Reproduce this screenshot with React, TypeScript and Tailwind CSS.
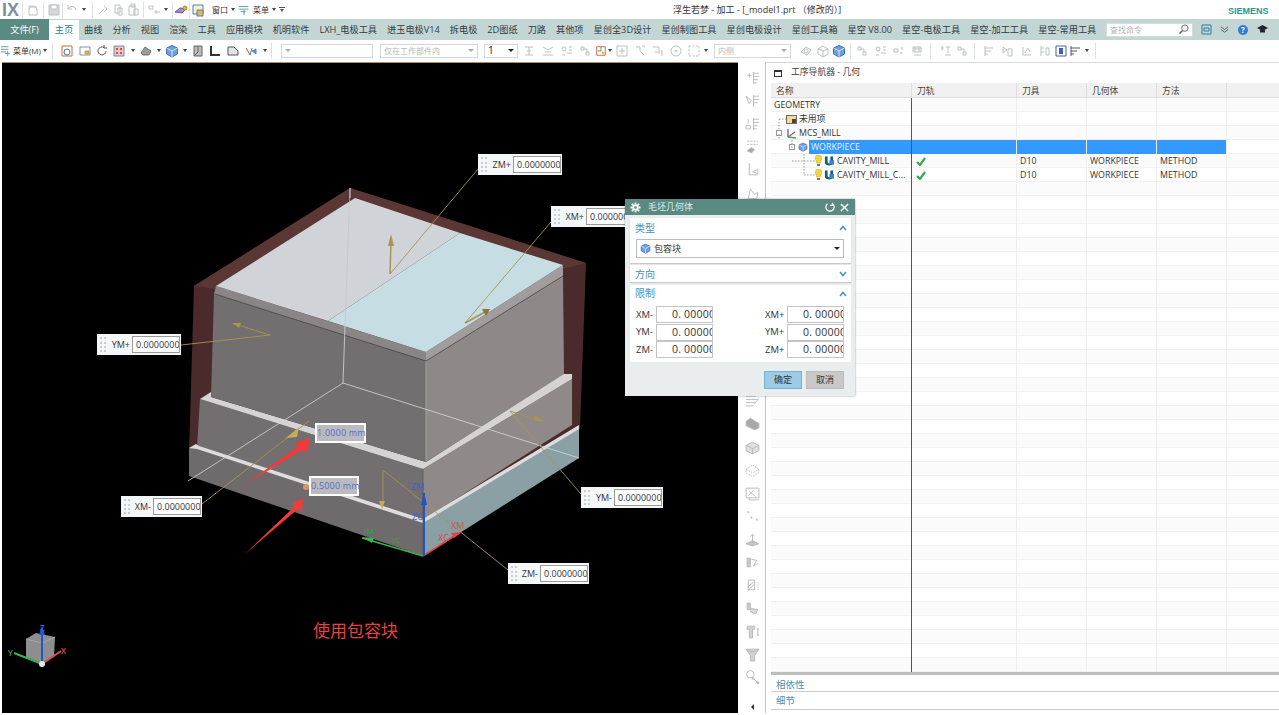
import React from "react";

const FONT = "font-['Open_Sans','Noto_Sans_CJK_SC',sans-serif]";

function Sep({ m = "mx-[3px]" }: { m?: string }) {
  return <span className={`w-px h-[16px] bg-[#dfe2e3] shrink-0 ${m}`} />;
}
function Caret({ m = "mx-[3px]" }: { m?: string }) {
  return <span className={`w-0 h-0 border-x-[2px] border-x-transparent border-t-[3px] border-t-[#444] shrink-0 ${m}`} />;
}
function Ico({ children, w = "w-[18px]" }: { children: React.ReactNode; w?: string }) {
  return (
    <span className={`${w} h-[16px] flex items-center justify-center shrink-0`}>
      <svg width="14" height="14" viewBox="0 0 14 14" fill="none" stroke="#bcc0c1" strokeWidth="1">
        {children}
      </svg>
    </span>
  );
}
const Cube = () => (
  <>
    <path d="M7 1.5 12.5 4v6L7 13 1.5 10V4Z" fill="#6f9fe0" stroke="#3a6fbb" />
    <path d="M1.5 4 7 7l5.5-3M7 7v6" stroke="#d6e6fa" />
  </>
);
const Gears = () => (
  <>
    <circle cx="4" cy="5" r="2" />
    <path d="M7 9h5M9 3h3M9 6h3M2 11h3" />
  </>
);
const Tri = () => (
  <>
    <path d="M2 3h3v3H2zM7 8h3v3H7z" />
    <path d="M5 5h3v3" />
  </>
);

const menus = ["曲线", "分析", "视图", "渲染", "工具", "应用模块", "机明软件", "LXH_电极工具", "进玉电极V14", "拆电极", "2D图纸", "刀路", "其他项", "星创全3D设计", "星创制图工具", "星创电极设计", "星创工具箱", "星空 V8.00", "星空-电极工具", "星空-加工工具", "星空-常用工具"];

function TitleBar() {
  return (
    <div className="relative h-[19px] flex items-center bg-white shrink-0">
      <span className="ml-[2px] w-[17px] text-[18px] leading-none font-bold text-[#7f8f98] font-['Liberation_Sans',sans-serif]">IX</span>
      <Sep />
      <Ico w="w-[14px]"><path d="M3 3h5l3 3v6H3z" /><path d="M3 6l2-2h6" /></Ico>
      <Sep />
      <Ico w="w-[14px]"><path d="M2 2h10v10H2z" fill="#d5d8da" /><path d="M4 2h6v4H4z" fill="#fff" /></Ico>
      <Sep m="mx-[1px]" />
      <span className="w-px" />
      <Ico w="w-[14px]"><path d="M3 6c2-4 7-3 8 1M3 2v4h4" /></Ico>
      <Caret />
      <Sep />
      <Ico w="w-[14px]"><path d="M3 11l5-5M8 3l3 3-3 3" /></Ico>
      <Ico w="w-[16px]"><path d="M4 2h5v8H4zM7 5h4v7H7z" /></Ico>
      <Ico w="w-[14px]"><path d="M3 3h6v9H3zM5 1h4v3H5zM8 6h4v6H8z" /></Ico>
      <Sep />
      <Ico w="w-[14px]"><path d="M2 3h4v3H2zM8 8h2v2H8zM11 9h2" /></Ico>
      <Caret />
      <Sep m="mx-[1px]" />
      <Ico w="w-[14px]"><path d="M1 9l5-4 6 1-4 4z" fill="#a78ac8" stroke="#6b5a9c" /><circle cx="11" cy="5" r="2" fill="#e8b13a" stroke="#b9861c" /></Ico>
      <Sep m="mx-[1px]" />
      <Ico w="w-[14px]"><path d="M2 2h10v9H2z" fill="#fff1bf" stroke="#4a7fc8" /><path d="M6 7h6v6H6z" fill="#e9b84c" stroke="#4a7fc8" /></Ico>
      <span className="text-[8px] text-[#333] ml-[7px]">窗口</span>
      <Caret />
      <Ico w="w-[12px]"><path d="M1 3h11M1 6h11M3 9h6M7 7v6" stroke="#4e8a9e" /></Ico>
      <span className="text-[8px] text-[#333] ml-[3px]">菜单</span>
      <Caret />
      <span className="w-[6px] h-[5px] border-t border-[#555] flex justify-center"><span className="mt-px w-0 h-0 border-x-[2px] border-x-transparent border-t-[3px] border-t-[#555]" /></span>
      <span className="absolute left-[673px] top-[3px] text-[9px] leading-[14px] whitespace-nowrap text-[#333]">浮生若梦 - 加工 - [_model1.prt （修改的）]</span>
      <span className="absolute left-[1228px] top-[5px] text-[9px] leading-[12px] font-bold text-[#1a9a9a] font-['Liberation_Sans',sans-serif]">SIEMENS</span>
    </div>
  );
}

function MenuBar() {
  return (
    <div className="h-[21px] flex items-center bg-[#c4d6d4] shrink-0 text-[9.2px] text-[#2f3c44] whitespace-nowrap">
      <span className="w-[49px] h-full flex items-center justify-center bg-[#5b8a83] text-white">文件(F)</span>
      <span className="w-[30px] h-full flex items-center justify-center bg-white text-[#2b7f9a] border-t border-[#c4d6d4]">主页</span>
      <div className="flex items-center gap-[10px] ml-[5px] w-[1022px]">
        {menus.map((m) => (
          <span key={m}>{m}</span>
        ))}
      </div>
      <div className="w-[87px] h-[14px] bg-white border border-[#d5dcdc] flex items-center justify-between px-[3px] text-[8px] text-[#aeb4b6]">
        查找命令
        <svg width="11" height="11" viewBox="0 0 12 12" fill="none" stroke="#666"><circle cx="7.5" cy="4.5" r="3.5" fill="#eef2f4" /><path d="M5 7 1.5 10.5" strokeWidth="1.6" /></svg>
      </div>
      <svg className="ml-[8px]" width="11" height="11" viewBox="0 0 11 11" fill="none" stroke="#2c7aa8"><path d="M1 1h9v9H1z" /><path d="M3 4h5v3H3z" /></svg>
      <svg className="ml-[8px]" width="9" height="9" viewBox="0 0 10 10" fill="none" stroke="#556"><path d="M1 2l4 3 4-3M1 5l4 3 4-3" /></svg>
      <span className="ml-[9px] w-[10px] h-[10px] rounded-full bg-[#2f7cd6] text-white text-[8px] leading-[10px] text-center font-bold">?</span>
      <svg className="ml-[9px]" width="11" height="9" viewBox="0 0 11 9"><path d="M0 3 5.5 0 11 3 5.5 6Z" fill="#223" /><path d="M3 5v2.500h5V5" fill="#223" /></svg>
    </div>
  );
}

function Combo({ w, text, caret = "#aaa", strong }: { w: string; text?: string; caret?: string; strong?: boolean }) {
  return (
    <span className={`${w} h-[14px] bg-white border border-[#d6d6d6] flex items-center justify-between px-[3px] text-[8px] shrink-0 ${strong ? "text-[#222] text-[10px]" : "text-[#b4b8ba]"}`}>
      {text ?? ""}
      <span className="w-0 h-0 border-x-[3px] border-x-transparent border-t-[3px]" style={{ borderTopColor: caret }} />
    </span>
  );
}

function ToolBar() {
  return (
    <div className="h-[21px] flex items-center bg-white shrink-0 whitespace-nowrap">
      <Ico w="w-[12px]"><path d="M1 2h9M1 5h9M1 8h6M9 7v6M6 10h6" stroke="#5b8a9c" /></Ico>
      <span className="w-[27px] text-[8px] text-[#333] ml-px">菜单(M)</span>
      <Caret />
      <span className="w-px" />
      <Sep m="mx-[1px]" />
      <span className="w-[4px]" />
      <Ico><path d="M2 2h10v10H2z" stroke="#c96a45" /><circle cx="7" cy="8" r="3" stroke="#3a76b0" /></Ico>
      <Ico><path d="M2 3h10v8H2z" stroke="#7b94ad" /><path d="M7 7h4v3H7z" fill="#e6b665" stroke="#c49a4c" /></Ico>
      <Ico w="w-[16px]"><path d="M11 7a4 4 0 1 1-2-3.500M9 1v3h3" stroke="#555" /></Ico>
      <Ico><path d="M2 2h10v10H2z" fill="#e8c9c4" stroke="#7289b0" /><path d="M4 4h2v2H4zM8 4h2v2H8zM4 8h2v2H4zM8 8h2v2H8z" fill="#d84b3c" stroke="none" /></Ico>
      <Caret />
      <Ico w="w-[16px]"><path d="M2 9l4-6 6 4-2 4H4z" fill="#9a9a9a" stroke="#777" /></Ico>
      <Caret />
      <Ico w="w-[16px]"><Cube /></Ico>
      <Caret />
      <Ico w="w-[16px]"><path d="M3 2h8v10H3z" fill="#b8bcc0" stroke="#666" /><path d="M3 12 7 8V2" stroke="#666" /></Ico>
      <Ico><path d="M3 2v9h9" stroke="#333" strokeWidth="2" /></Ico>
      <Ico><path d="M2 11V3h6l4 4v4z" fill="#e4e5e7" stroke="#555" /></Ico>
      <Ico><path d="M2 4l4 7" stroke="#c84a3b" /><path d="M6 11l2-7" stroke="#3d9c52" /><path d="M8 7l4-2v5z" fill="#6a92d8" stroke="#5c84ca" /></Ico>
      <Caret />
      <Sep m="mx-[1px]" />
      <span className="w-[8px]" />
      <Combo w="w-[92px]" />
      <span className="w-[7px]" />
      <Combo w="w-[98px]" text="仅在工作部件内" />
      <span className="w-[6px]" />
      <Combo w="w-[34px]" text="1" caret="#222" strong />
      <span className="w-px" />
      <Ico w="w-[19px]"><path d="M3 3h8M3 11h8M5 7h4M7 3v8" /></Ico>
      <Ico w="w-[19px]"><path d="M2 3l5 3 5-3M2 11h10M4 8h6" /></Ico>
      <Ico w="w-[19px]"><Gears /></Ico>
      <Ico w="w-[19px]"><Tri /></Ico>
      <Ico w="w-[12px]"><path d="M2 2h10v10H2z" stroke="#c9594a" fill="#fff" /><path d="M7 2v5H3" stroke="#4a8f55" /><path d="M7 8h5l-2.500 4z" fill="#e7c23c" stroke="none" /></Ico>
      <Caret m="mx-[1px]" />
      <Ico><path d="M2 2h10v10H2zM7 4v6M4 7h6" /></Ico>
      <Ico><path d="M3 3h4v4M7 7l4 4M9 2h3" /></Ico>
      <Ico><path d="M2 3h6M8 3v7M4 8h3M11 6v6" /></Ico>
      <Ico><circle cx="7" cy="7" r="5" /><circle cx="7" cy="7" r="1" /></Ico>
      <Ico><path d="M2 2h10v10H2z" strokeDasharray="2 1.500" /></Ico>
      <Caret m="mx-[1px]" />
      <span className="w-[5px]" />
      <Combo w="w-[77px]" text="内侧" />
      <span className="w-[6px]" />
      <Ico><path d="M2 8l5-5 5 3-4 5z" /><circle cx="7" cy="7" r="2" /></Ico>
      <Ico w="w-[16px]"><path d="M7 2l5 3v5l-5 3-5-3V5zM7 7v6M2 5l5 2 5-2" /></Ico>
      <Ico w="w-[16px]"><Cube /></Ico>
      <Sep />
      <Ico><Tri /></Ico>
      <Ico><Gears /></Ico>
      <Ico w="w-[17px]"><path d="M2 5h4v3H2zM8 9h3M10 3v3" /></Ico>
      <Ico w="w-[20px]"><path d="M3 3h8v5H3zM3 5h8M5 3v5M9 3v5M4 11h7" /></Ico>
      <Sep />
      <span className="w-[3px]" />
      <Ico><path d="M2 4h3M3 2v5M7 3h4M9 3v6M6 11h6" /></Ico>
      <Ico w="w-[16px]"><Tri /></Ico>
      <Sep />
      <span className="w-[2px]" />
      <Ico><path d="M3 2v10M3 4h8M3 7h6M3 10h3" /></Ico>
      <Ico><path d="M3 3l4 3-4 3zM8 5h4v7H8z" /></Ico>
      <Ico w="w-[20px]"><path d="M4 3v8h8M6 9l3-5 2 4" /></Ico>
      <Ico><path d="M3 2v10M3 4h3M3 8h3M8 4h3v7H8z" /></Ico>
      <Ico w="w-[14px]"><path d="M2 2h10v10H2z" stroke="#3f62b8" /><path d="M5 4h4v6H5z" fill="#3f62b8" stroke="none" /></Ico>
      <Ico w="w-[14px]"><path d="M3 2v10M3 4h9M3 7h6M3 10h3" stroke="#556" /></Ico>
      <Caret />
      <Sep />
    </div>
  );
}

function Callout({ pos, label, w }: { pos: string; label: string; w: string }) {
  return (
    <div className={`absolute ${pos} ${w} h-[21px] bg-[#f3f7f7] flex items-center text-[9px] text-[#333]`}>
      <span className="ml-[3px] w-[6px] h-[15px] border-x-2 border-dotted border-[#c9cdcd] shrink-0" />
      <span className="flex-1 text-right pr-[2px] whitespace-nowrap">{label}</span>
      <span className="w-[48px] h-[17px] mr-px bg-white border border-[#9a9a9a] overflow-hidden px-[3px] leading-[15px] text-[#333] whitespace-nowrap shrink-0">0.0000000</span>
    </div>
  );
}

function DimBox({ pos, w, text }: { pos: string; w: string; text: string }) {
  return (
    <div className={`absolute ${pos} ${w} h-[20px] bg-white p-[2px]`}>
      <div className="h-full bg-[#bbbabf] text-[9px] tracking-[0.2px] leading-[16px] text-center text-[#5570c4] whitespace-nowrap">{text}</div>
    </div>
  );
}

function Model() {
  const gold = "#a8954f";
  return (
    <svg className="absolute inset-0" width="736" height="651" viewBox="2 62 736 651" fill="none">
      <polygon points="194,285 350,187 586,262 580,428 420,525 189,452" fill="#4a2a2b" />
      <polygon points="194,285 350,187 586,262 563,268 355,199 216,288" fill="#5a3634" />
      {/* lowest block */}
      <polygon points="189,447 197,444 423,518 423,555 189,475" fill="#6f6a6c" />
      <polygon points="423,519 579,426 579,457 423,555" fill="#8aa0a4" />
      {/* middle block */}
      <polygon points="200,398 423,468 423,520 197,446" fill="#736e70" />
      <polygon points="423,468 572,378 572,424 423,519" fill="#8f898a" />
      <polygon points="189,447 196,443 199,445 423,518 579,424 579,428 423,522 197,448" fill="#dedcdc" />
      <polygon points="200,398 211,391 211,396 426,461 562,373 572,373 572,378 423,468" fill="#d5d3d3" />
      {/* upper block */}
      <polygon points="214,293 426,360 426,461 211,396" fill="#736e70" />
      <polygon points="426,360 563,275 564,373 426,461" fill="#8e8889" />
      <polygon points="216,285 426,351 426,360 214,293" fill="#8a8688" />
      <polygon points="426,351 563,264 563,275 426,360" fill="#a19d9e" />
      <path d="M215 293 426 360 563 275" stroke="#3f3a3c" strokeWidth="0.6" />
      <path d="M426 360V461" stroke="#a5a1a2" strokeWidth="1" />
      {/* top */}
      <polygon points="355,197 216,285 328,320 460,232" fill="#d0d3d8" />
      <polygon points="460,232 563,264 426,351 328,320" fill="#c5dde3" />
      {/* wire box */}
      <path d="M345 325 343 382M343 382 188 480M343 382 579 457" stroke="#d8d8d8" strokeWidth="0.8" />
      <path d="M350 187 345 325" stroke="#bfc3c8" strokeWidth="0.6" />
      <path d="M350 187V197" stroke="#e6e6e6" strokeWidth="0.8" />
      <path d="M423 468V555" stroke="#56555a" strokeWidth="0.8" />
      {/* handles */}
      <g stroke={gold} strokeWidth="0.9">
        <path d="M478 168 390 273" />
        <path d="M551 221 465 322" />
        <path d="M181 344 270 334 235 323" />
        <path d="M202 503 309 420" />
        <path d="M581 493 510 410 540 420" />
        <path d="M508 569 383 469V500" />
        <path d="M390 273 391 240" strokeWidth="1.500" />
        <path d="M465 322 485 311" strokeWidth="1.500" />
      </g>
      <polygon points="391,233 388,245 394,245" fill={gold} />
      <polygon points="490,308 482,308 486,315" fill="#86763a" />
      <polygon points="232,322 241,322 239,327" fill={gold} />
      <polygon points="286,437 299,426 297,436" fill="#c4ac5c" />
      <polygon points="546,421 534,414 535,420" fill={gold} />
      <polygon points="382,508 379,500 385,500" fill="#c4ac5c" />
      <circle cx="306" cy="486" r="3" fill="#d9975c" />
      {/* WCS */}
      <path d="M423 555 362 537" stroke="#39b54a" strokeWidth="1.500" />
      <polygon points="362,536 374,537 372,542" fill="#39b54a" />
      <path d="M423 555 459 532" stroke="#e24545" strokeWidth="1.800" />
      <polygon points="462,531 451,532 454,537" fill="#e24545" />
      <path d="M424 555V492" stroke="#1f55c8" strokeWidth="2" />
      <polygon points="424,491 421,504 427,504" fill="#1f55c8" />
      <g fontSize="9" fontFamily="Open Sans, sans-serif">
        <text x="411" y="489" fill="#3a63cc">ZM</text>
        <text x="412" y="519" fill="#3a63cc">ZC</text>
        <text x="438" y="540" fill="#d84a4a">XC</text>
        <text x="451" y="528" fill="#d84a4a">XM</text>
        <text x="392" y="542" fill="#39a84a" fontSize="7">YC</text>
        <text x="363" y="533" fill="#39a84a" fontSize="7">YM</text>
      </g>
      {/* red arrows */}
      <polygon points="243,485 296,447 297,441 310,437 307,452 302,449" fill="#ef3b3b" />
      <polygon points="245,553 294,506 293,502 304,497 301,511 298,508" fill="#ef3b3b" />
      {/* triad */}
      <polygon points="36,632 55,636 54,656 42,662 26,656 26,638" fill="#8e8e8e" />
      <path d="M26 638 42 642 55 636M42 642V662" stroke="#b5b5b5" strokeWidth="0.6" />
      <path d="M42 663V628" stroke="#1c58d0" strokeWidth="2" />
      <polygon points="42,625 39,634 45,634" fill="#1c58d0" />
      <path d="M42 663 61 650" stroke="#e04a4a" strokeWidth="2" />
      <path d="M42 663 14 652" stroke="#3cae56" strokeWidth="2" />
      <circle cx="42" cy="663" r="3" fill="#e8e8e8" />
      <g fontSize="8" fontFamily="Open Sans, sans-serif" fontWeight="600">
        <text x="40" y="630" fill="#2c68e0">Z</text>
        <text x="61" y="653" fill="#e04a4a">X</text>
        <text x="8" y="655" fill="#3cae56">Y</text>
      </g>
    </svg>
  );
}

function Viewport() {
  return (
    <div className="relative ml-[2px] w-[736px] bg-black border-t border-[#a88e72] overflow-hidden">
      <Model />
      <Callout pos="left-[476px] top-[91px]" w="w-[84px]" label="ZM+" />
      <Callout pos="left-[549px] top-[143px]" w="w-[84px]" label="XM+" />
      <Callout pos="left-[95px] top-[271px]" w="w-[84px]" label="YM+" />
      <Callout pos="left-[119px] top-[433px]" w="w-[81px]" label="XM-" />
      <Callout pos="left-[579px] top-[424px]" w="w-[82px]" label="YM-" />
      <Callout pos="left-[506px] top-[500px]" w="w-[81px]" label="ZM-" />
      <DimBox pos="left-[313px] top-[360px]" w="w-[51px]" text="1.0000 mm" />
      <DimBox pos="left-[307px] top-[413px]" w="w-[50px]" text="0.5000 mm" />
      <div className="absolute left-[311px] top-[557px] text-[17px] leading-[22px] text-[#e84040] whitespace-nowrap">使用包容块</div>
    </div>
  );
}

const lines = <><path d="M2 4h10M2 7h10M2 10h6" /></>;
const side: React.ReactNode[] = [
  <><path d="M8 2v11M8 3h5M8 6h5M8 9h4M8 12h3" /><path d="M2 5h4M4 3v4" /></>,
  <><path d="M8 2v11M8 3h5M8 6h5M8 9h4" /><path d="M1 3l5 4-2 3z" /></>,
  <><path d="M8 2v11M8 3h5M8 6h5M8 9h4M8 12h3" /><path d="M3 3v4M1 9h4v3H1z" /></>,
  <><path d="M2 11l4-3 3 2-3 3z" fill="#aaa" /><path d="M2 2h10M2 5h10" strokeDasharray="2 1" /></>,
  <><path d="M4 1v11h8M7 9l5-2v4z" /></>,
  <><path d="M3 12l2-9 4 5 3-2-1 6z" /></>,
  lines, lines, lines, lines, lines, lines, lines, lines,
  <><path d="M1 3h9M1 6h11M1 9h9M1 12h7M9 10l4-5" /></>,
  <><path d="M1 5l4-3 8 5v4l-4 2-8-4z" fill="#a8a8a8" /></>,
  <><path d="M1 5l6-3 6 3v5l-6 3-6-3z" fill="#dedede" /><path d="M1 5l6 3 6-3M7 8v5" /></>,
  <><path d="M1 6l6-4 6 4v3l-6 4-6-4z" strokeDasharray="1.500 1" /><path d="M1 6l6 3 6-3" strokeDasharray="1.500 1" /></>,
  <><path d="M1 2h12v9H1zM4 5l6 5M3 9l5-5" /><path d="M4 11v2h9" /></>,
  <><path d="M3 2v2M2 3h2M6 7v2M5 8h2M11 9v2M10 10h2" /></>,
  <><path d="M1 11l6-3 6 3-6 2z" fill="#c4c4c4" /><path d="M7 10V2M5 4l2-2 2 2" /></>,
  <><path d="M2 3h3v8H2z" fill="#c8c8c8" /><path d="M6 4l5 1-3 5 4-2" /></>,
  <><path d="M3 2h6v9H3zM3 8l6-5M3 11l6-5" /><path d="M12 4v8" strokeDasharray="1 1" /></>,
  <><path d="M2 2h3v6H2z" fill="#c8c8c8" /><path d="M6 7l6 1-2 4-5-2z" fill="#dadada" /></>,
  <><path d="M2 2h7v3H7v8H4V5H2z" fill="#d2d2d2" /><path d="M12 4v7M11 5l1-1 1 1M11 10l1 1 1-1" /></>,
  <><path d="M1 2h12L9 8v5H5V8z" fill="#d0d0d0" /><path d="M1 2c4 3 8 3 12 0" /></>,
  <><circle cx="5" cy="4" r="3.500" /><path d="M7 7l5 5" /><circle cx="7.500" cy="8" r="0.800" /><circle cx="12" cy="12" r="1" fill="#aaa" /></>,
];

function SideBar() {
  return (
    <div className="w-[27px] border-r border-[#c4c4c4] flex flex-col items-center pt-[4px] bg-white shrink-0 ml-px">
      {side.map((s, i) => (
        <span key={i} className="h-[23.100px] flex items-center justify-center shrink-0">
          <svg width="15" height="15" viewBox="0 0 14 14" fill="none" stroke="#b8bbbc" strokeWidth="0.9">
            {s}
          </svg>
        </span>
      ))}
      <span className="mt-[14px] w-0 h-0 border-y-[3px] border-y-transparent border-r-[3px] border-r-[#333]" />
    </div>
  );
}

const Bulb = () => (
  <svg width="7" height="12" viewBox="0 0 7 12"><path d="M3.500 0a3.300 3.300 0 0 1 2 6v2h-4V6a3.300 3.300 0 0 1 2-6Z" fill="#f2d53c" stroke="#c9a820" strokeWidth="0.5" /><path d="M2 9h3v2H2z" fill="#777" /></svg>
);
const Tool = () => (
  <svg width="10" height="12" viewBox="0 0 11 12"><path d="M1 1h3v6c0 2 3 2 3 0V1h3v7c0 4-9 4-9 0Z" fill="#125f70" /><path d="M6 5h5v5H6z" fill="#3b7fd8" /></svg>
);
const Check = () => (
  <svg width="10" height="9" viewBox="0 0 10 9"><path d="M1 5l3 3 5-7" fill="none" stroke="#2fae4a" strokeWidth="2.200" /></svg>
);

const cols = ["w-[141px]", "w-[105px]", "w-[70px]", "w-[70px]", "w-[70px]"];

function Row({ i, name, tool, geo, met, ok, sel, children }: { i: number; name?: React.ReactNode; tool?: string; geo?: string; met?: string; ok?: boolean; sel?: boolean; children?: React.ReactNode }) {
  return (
    <div className={`flex h-[14px] shrink-0 shadow-[inset_0_-1px_0_#f1f1f1] text-[8.800px] leading-[14px] text-[#333] whitespace-nowrap ${i % 2 ? "bg-white" : "bg-[#fbfbfb]"}`}>
      <div className={`${cols[0]} relative border-r border-[#555] flex items-center overflow-hidden shrink-0`}>{name ?? children}</div>
      <div className={`${cols[1]} border-r border-[#eee] flex items-center pl-[4px] shrink-0 ${sel ? "bg-[#3399ff]" : ""}`}>{ok ? <Check /> : null}</div>
      <div className={`${cols[2]} border-r border-[#eee] pl-[3px] shrink-0 ${sel ? "bg-[#3399ff]" : ""}`}>{tool}</div>
      <div className={`${cols[3]} border-r border-[#eee] pl-[3px] shrink-0 ${sel ? "bg-[#3399ff]" : ""}`}>{geo}</div>
      <div className={`${cols[4]} border-r border-[#eee] pl-[3px] shrink-0 ${sel ? "bg-[#3399ff]" : ""}`}>{met}</div>
    </div>
  );
}

function Navigator() {
  const empty = Array.from({ length: 35 }, (_, i) => i + 6);
  return (
    <div className="flex-1 flex flex-col bg-white min-w-0 pl-[5px] border-t border-[#d8d8d8]">
      <div className="h-[20px] flex items-center shrink-0 text-[8.800px] text-[#444]">
        <span className="ml-[3px] w-[8px] h-[7px] border border-[#333] border-t-2" />
        <span className="ml-[9px]">工序导航器 - 几何</span>
      </div>
      <div className="flex h-[15px] shrink-0 bg-[#f1f1f1] shadow-[inset_0_-1px_0_#ddd] text-[8.800px] leading-[16px] text-[#444]">
        {["名称", "刀轨", "刀具", "几何体", "方法"].map((h, i) => (
          <div key={h} className={`${cols[i]} border-r border-[#dedede] pl-[5px] shrink-0`}>{h}</div>
        ))}
      </div>
      <div className="relative flex flex-col h-[574px] overflow-hidden">
        <Row i={0} name={<span className="pl-[3px]">GEOMETRY</span>} />
        <Row i={1}>
          <span className="ml-[15px] w-[11px] h-[9px] bg-[#f5d98a] border border-[#6b6b6b] relative"><span className="absolute right-0 bottom-0 w-[4px] h-[4px] bg-[#444]" /></span>
          <span className="ml-[2px]">未用项</span>
        </Row>
        <Row i={2}>
          <span className="ml-[5px] w-[6px] h-[6px] border border-[#999] bg-white shrink-0" />
          <svg className="ml-[4px]" width="11" height="11" viewBox="0 0 11 11" fill="none" strokeWidth="1.300"><path d="M2 9V1" stroke="#2b6ed6" /><path d="M2 9 9 4" stroke="#d84b3c" /><path d="M2 9l8 1" stroke="#3aa655" /></svg>
          <span className="ml-[2px]">MCS_MILL</span>
        </Row>
        <Row i={3} sel>
          <span className="ml-[18px] w-[6px] h-[6px] border border-[#999] bg-white shrink-0" />
          <svg className="ml-[3px]" width="10" height="10" viewBox="0 0 14 14" fill="none" stroke="#4a6fb8"><Cube /></svg>
          <span className="ml-px flex-1 bg-[#3399ff] text-[#e4f1ff] pl-[2px] h-full">WORKPIECE</span>
        </Row>
        <Row i={4} ok tool="D10" geo="WORKPIECE" met="METHOD">
          <span className="ml-[44px] mr-[2px] flex"><Bulb /></span>
          <Tool />
          <span className="ml-[3px]">CAVITY_MILL</span>
        </Row>
        <Row i={5} ok tool="D10" geo="WORKPIECE" met="METHOD">
          <span className="ml-[44px] mr-[2px] flex"><Bulb /></span>
          <Tool />
          <span className="ml-[3px]">CAVITY_MILL_C...</span>
        </Row>
        {empty.map((i) => (
          <Row key={i} i={i} />
        ))}
        <svg className="absolute left-0 top-0" width="60" height="84" fill="none" stroke="#9a9a9a" strokeDasharray="1.500 1.500" strokeWidth="1">
          <path d="M8 21H15M8 21V33M8 36V42M21 42V50M21 63H44M33 56V77H44" />
        </svg>
      </div>
      <div className="h-[3px] bg-[#bdbdbd] shrink-0" />
      <div className="h-[17px] pt-[3px] pl-[5px] border-b border-[#ccc] text-[9.500px] leading-[14px] text-[#4a90b4] shrink-0">相依性</div>
      <div className="h-[18px] pt-[2px] pl-[5px] border-b border-[#ccc] text-[9.500px] leading-[14px] text-[#4a90b4] shrink-0">细节</div>
    </div>
  );
}

function Section({ title, open, className, children, head = "h-[17px]" }: { title: string; open: boolean; className: string; children?: React.ReactNode; head?: string }) {
  return (
    <div className={`bg-white ${className}`}>
      <div className={`${head} flex items-center justify-between pl-[5px] pr-[4px] text-[10px] text-[#4a90b4]`}>
        <span>{title}</span>
        <svg width="8" height="6" viewBox="0 0 8 6" fill="none" stroke="#3d94b8" strokeWidth="1.500">
          <path d={open ? "M1 5l3-3.500L7 5" : "M1 1l3 3.500L7 1"} />
        </svg>
      </div>
      {children}
    </div>
  );
}

function Field({ label, lw }: { label: string; lw: string }) {
  return (
    <div className="flex items-center h-[17.500px]">
      <span className={`${lw} text-[9.500px] text-[#333]`}>{label}</span>
      <span className="w-[57px] h-[17px] border border-[#c4c4c4] bg-white overflow-hidden pl-[15px] text-[10.500px] leading-[15px] tracking-[0.2px] text-[#333] whitespace-nowrap">
        0. 00000
      </span>
    </div>
  );
}

function Dialog() {
  return (
    <div className="absolute left-[625px] top-[199px] w-[230px] h-[197px] bg-[#e9eded] flex flex-col shadow-[0_0_2px_rgba(0,0,0,0.4)]">
      <div className="h-[16px] bg-[#5b8a83] flex items-center text-white text-[9px] shrink-0">
        <svg className="ml-[5px]" width="11" height="11" viewBox="0 0 24 24" fill="none" stroke="#fff" strokeWidth="4"><circle cx="12" cy="12" r="5" /><path d="M12 1v4M12 19v4M1 12h4M19 12h4M4 4l3 3M17 17l3 3M4 20l3-3M17 7l3-3" /></svg>
        <span className="ml-[7px] flex-1 text-[#dfeaea]">毛坯几何体</span>
        <svg width="10" height="10" viewBox="0 0 12 12" fill="none" stroke="#fff" strokeWidth="1.500"><path d="M3 2a5 5 0 1 0 6 0M9 1v3H6" /></svg>
        <svg className="ml-[5px] mr-[6px]" width="9" height="9" viewBox="0 0 10 10" stroke="#fff" strokeWidth="1.600"><path d="M1 1l8 8M9 1l-8 8" /></svg>
      </div>
      <div className="pl-[5px] pr-[4px] pt-[3px] flex flex-col shrink-0">
        <Section title="类型" open head="h-[20px]" className="h-[45px] shadow-[0_1px_1px_rgba(0,0,0,0.15)]">
          <div className="ml-[6px] mr-[7px] mt-px h-[19px] border border-[#bcbcbc] flex items-center text-[9px] text-[#333]">
            <svg className="ml-[3px]" width="11" height="11" viewBox="0 0 14 14" fill="none" stroke="#4a6fb8"><Cube /></svg>
            <span className="ml-[3px] flex-1">包容块</span>
            <span className="mr-[3px] w-0 h-0 border-x-[3px] border-x-transparent border-t-[3px] border-t-[#222]" />
          </div>
        </Section>
        <Section title="方向" open={false} head="h-[18px]" className="h-[17px] mt-[2px] shadow-[0_1px_1px_rgba(0,0,0,0.15)]" />
        <Section title="限制" open className="h-[77px] mt-[3px]">
          <div className="flex justify-between pl-[6px] pr-[7px] pt-[4px]">
            <div className="flex flex-col"><Field lw="w-[20px]" label="XM-" /><Field lw="w-[20px]" label="YM-" /><Field lw="w-[20px]" label="ZM-" /></div>
            <div className="flex flex-col"><Field lw="w-[22px]" label="XM+" /><Field lw="w-[22px]" label="YM+" /><Field lw="w-[22px]" label="ZM+" /></div>
          </div>
        </Section>
      </div>
      <div className="flex justify-end gap-[4px] pr-[11px] pt-[9px] text-[9px] text-[#333]">
        <span className="w-[38px] h-[18px] bg-[#9ccbe4] border border-[#73b3d8] flex items-center justify-center">确定</span>
        <span className="w-[38px] h-[18px] bg-[#c9c9c9] border border-[#bbb] flex items-center justify-center">取消</span>
      </div>
    </div>
  );
}

export default function App() {
  return (
    <div className={`relative w-[1279px] h-[715px] overflow-hidden bg-white flex flex-col ${FONT}`}>
      <TitleBar />
      <MenuBar />
      <ToolBar />
      <div className="h-[1px] bg-white shrink-0" />
      <div className="h-[651px] flex shrink-0">
        <Viewport />
        <SideBar />
        <Navigator />
      </div>
      <Dialog />
    </div>
  );
}
